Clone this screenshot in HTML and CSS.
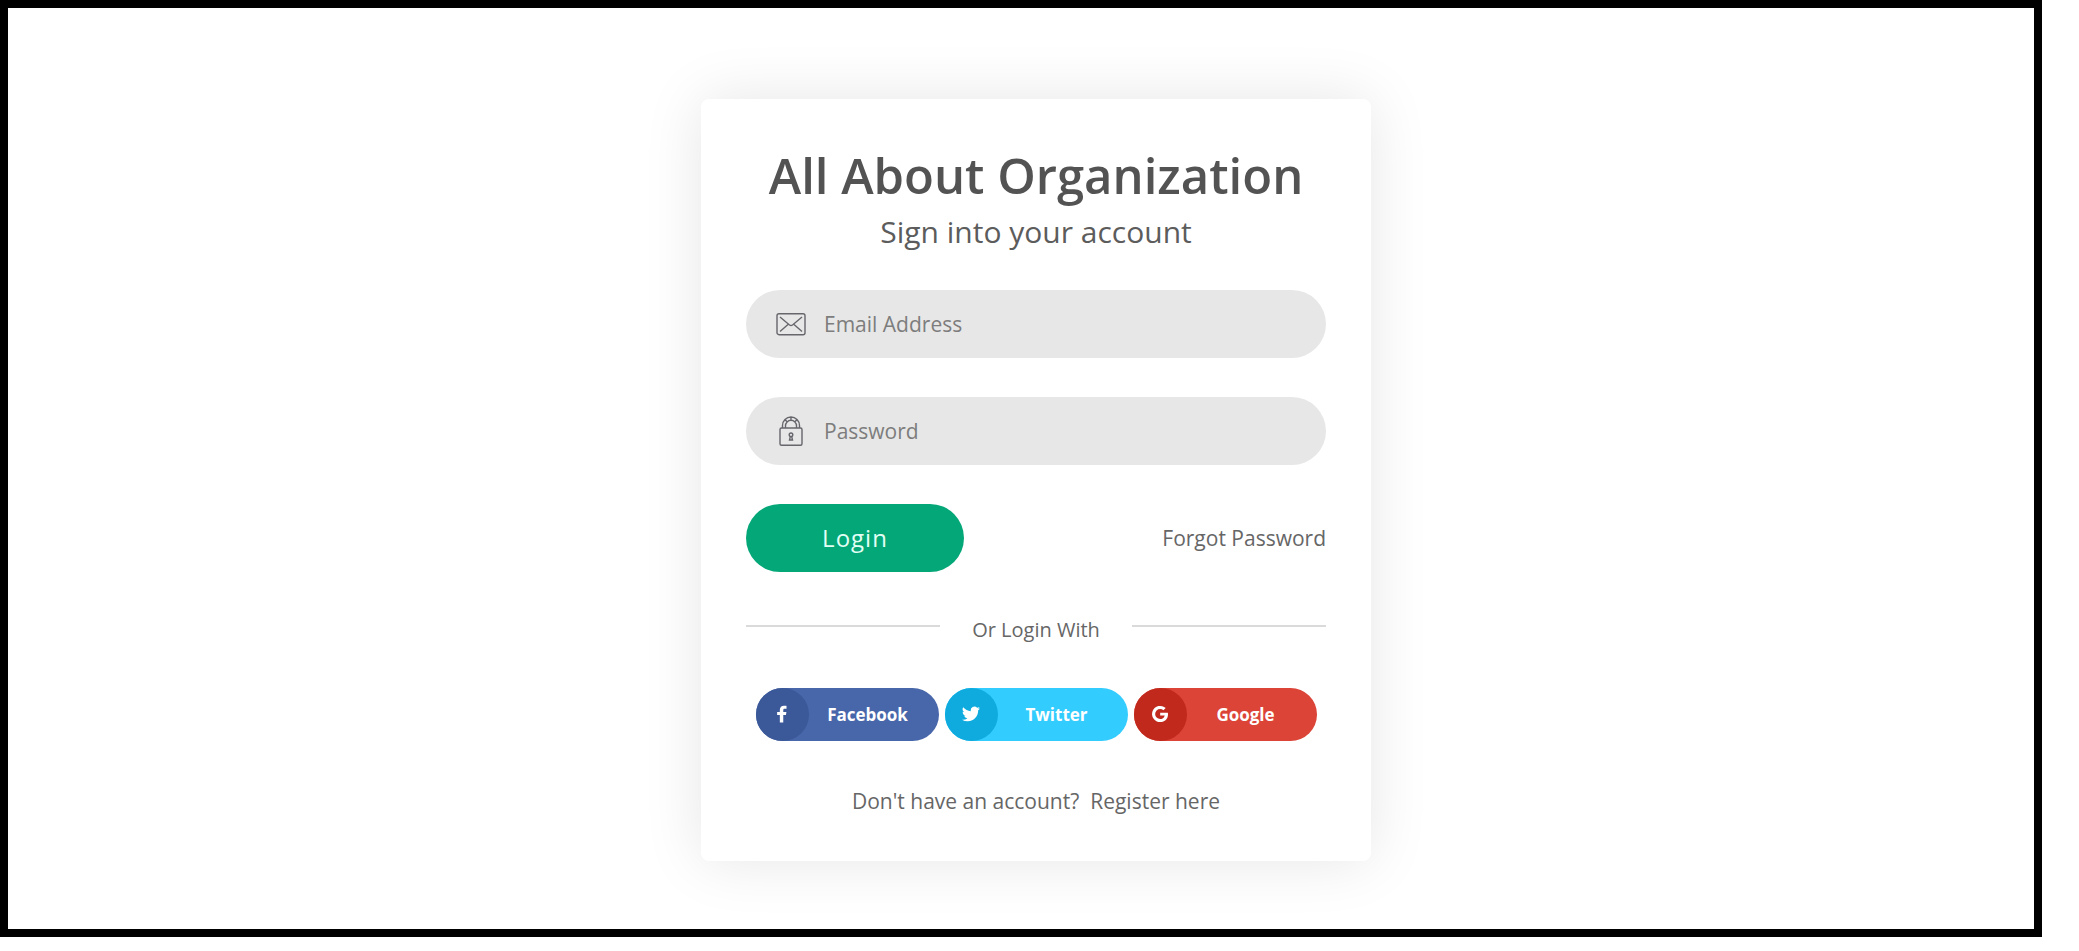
FILE: index.html
```html
<!DOCTYPE html>
<html lang="en">
<head>
<meta charset="utf-8">
<meta name="viewport" content="width=device-width, initial-scale=1">
<title>All About Organization - Login</title>
<link rel="stylesheet" href="styles.css">
</head>
<body>
<main class="frame">
  <section class="card">
    <h1 class="title">All About Organization</h1>
    <p class="subtitle">Sign into your account</p>
    <form class="form">
      <label class="field">
        <svg class="field-icon" viewBox="0 0 30 30" aria-hidden="true"><rect x="1" y="4.700" width="28" height="21" rx="2"/><path d="M4 8l9.500 8q1.500 1 3 0L26 8M4 22.500l8-7M26 22.500l-8-7"/></svg>
        <input class="input" type="email" placeholder="Email Address" aria-label="Email Address">
      </label>
      <label class="field">
        <svg class="field-icon" viewBox="0 0 30 30" aria-hidden="true"><rect x="4" y="12" width="22" height="17.200" rx="1.500"/><path d="M6.500 12V9.500a8.500 8.500 0 0 1 17 0V12M9.500 12V9.800a5.500 5.500 0 0 1 11 0V12M9 3.500l2 2.200M15 1v3.300M21 3.500l-2 2.200"/><circle cx="15" cy="18.800" r="1.800"/><path d="M14.300 20.600l-.8 3.400h3l-.8-3.400"/></svg>
        <input class="input" type="password" placeholder="Password" aria-label="Password">
      </label>
      <div class="actions">
        <button class="login" type="submit">Login</button>
        <a class="link" href="#">Forgot Password</a>
      </div>
    </form>
    <div class="divider"><span class="divider-text">Or Login With</span></div>
    <div class="social">
      <a class="social-btn facebook" href="#"><span class="badge"><svg class="social-icon" viewBox="0 0 20 20" aria-hidden="true"><path d="M15 1v3.200h-2c-1.400 0-1.600.7-1.600 1.700v2h3.500l-.5 3.300h-3V19.500H7.600v-8.300H4.600V7.900h3V5.400C7.600 2.500 9.400.8 12.300.8c1.200 0 2.400.1 2.700.2z"/></svg></span><span class="social-name">Facebook</span></a>
      <a class="social-btn twitter" href="#"><span class="badge"><svg class="social-icon" viewBox="0 0 24 24" aria-hidden="true"><path d="M23.950 4.570a10 10 0 0 1-2.820.770 4.960 4.960 0 0 0 2.160-2.720 9.900 9.900 0 0 1-3.120 1.190 4.920 4.920 0 0 0-8.390 4.490A13.980 13.980 0 0 1 1.640 3.160a4.920 4.920 0 0 0 1.520 6.570 4.900 4.900 0 0 1-2.230-.61v.06a4.920 4.920 0 0 0 3.950 4.830 4.900 4.900 0 0 1-2.220.08 4.930 4.930 0 0 0 4.600 3.420A9.870 9.870 0 0 1 0 19.540a13.940 13.940 0 0 0 7.550 2.210c9.050 0 14-7.500 14-13.980 0-.21 0-.42-.02-.63a9.940 9.940 0 0 0 2.420-2.570z"/></svg></span><span class="social-name">Twitter</span></a>
      <a class="social-btn google" href="#"><span class="badge"><svg class="social-icon" viewBox="0 0 20 20" aria-hidden="true"><path d="M10.200 8.500h8.500c.1.500.2 1 .2 1.700 0 5.100-3.500 8.800-8.700 8.800a9 9 0 1 1 6.100-15.600l-2.500 2.400A5.200 5.200 0 0 0 10.200 4.400a5.600 5.600 0 0 0 0 11.200c3.500 0 4.800-2.500 5-3.900h-5z"/></svg></span><span class="social-name">Google</span></a>
    </div>
    <p class="register">Don't have an account?&nbsp; <a class="link" href="#">Register here</a></p>
  </section>
</main>
</body>
</html>
```
FILE: styles.css
```css
* { box-sizing: border-box; }

body {
  margin: 0;
  min-height: 100vh;
  padding: 0 37px 14px 0;
  display: flex;
  background: #fff;
  color: #666;
  font-family: "Open Sans", sans-serif;
  font-size: 21px;
}

.frame {
  flex: 1;
  border: 8px solid #000;
  padding: 30px 0 8px 30px;
  display: flex;
  align-items: center;
  justify-content: center;
}

.card {
  width: 100%;
  max-width: 670px;
  padding: 44px 45px;
  border-radius: 8px;
  background: #fff;
  box-shadow: 0 0 60px rgba(0, 0, 0, 0.1);
}

.title {
  margin: 0;
  color: #535353;
  font-size: 49px;
  font-weight: 600;
  line-height: 64px;
  text-align: center;
}

.subtitle {
  margin: 0 0 33px;
  color: #5c5c5c;
  font-size: 30px;
  line-height: 50px;
  text-align: center;
}

.field {
  display: flex;
  align-items: center;
  gap: 18px;
  height: 68px;
  margin-bottom: 39px;
  padding: 0 30px;
  border-radius: 34px;
  background: #e7e7e7;
}

.field-icon {
  flex: none;
  width: 30px;
  height: 30px;
  fill: none;
  stroke: #66666c;
  stroke-width: 1.400;
}

.input {
  flex: 1;
  min-width: 0;
  padding: 0;
  border: 0;
  outline: 0;
  background: transparent;
  color: #555;
  font: inherit;
}

.input::placeholder { color: #7d7d7d; opacity: 1; }

.actions {
  display: flex;
  align-items: center;
  justify-content: space-between;
}

.login {
  width: 218px;
  height: 68px;
  border: 0;
  border-radius: 34px;
  background: #04a777;
  color: #e2fff5;
  font: inherit;
  font-size: 24px;
  letter-spacing: 1px;
}

.link { color: inherit; text-decoration: none; }

.divider {
  display: flex;
  align-items: center;
  gap: 32px;
  margin: 42px 0;
  font-size: 20px;
  line-height: 32px;
}

.divider::before,
.divider::after {
  content: "";
  flex: 1;
  height: 2px;
  margin-bottom: 8px;
  background: #dadada;
}

.social {
  display: flex;
  justify-content: center;
  gap: 6px;
}

.social-btn {
  display: flex;
  width: 183px;
  height: 53px;
  border-radius: 27px;
  color: #fff;
  font-size: 17px;
  font-weight: 700;
  line-height: 53px;
  text-align: center;
  text-decoration: none;
}

.badge {
  display: flex;
  align-items: center;
  justify-content: center;
  width: 53px;
  height: 53px;
  border-radius: 50%;
}

.social-icon { width: 18px; height: 18px; fill: #fff; }
.social-name { flex: 1; padding-right: 12px; }

.facebook { background: #4867aa; }
.facebook .badge { background: #3b5998; }
.twitter { background: #33ccff; }
.twitter .badge { background: #0fabdf; }
.google { background: #db4437; }
.google .badge { background: #c1291d; }

.register {
  margin: 44px 0 0;
  line-height: 32px;
  text-align: center;
}
```
